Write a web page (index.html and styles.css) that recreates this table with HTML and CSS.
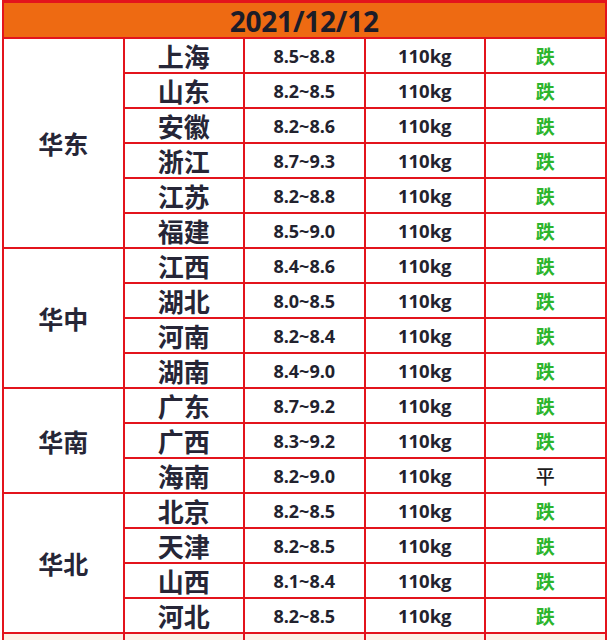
FILE: index.html
```html
<!DOCTYPE html>
<html lang="zh-CN">
<head>
<meta charset="utf-8">
<title>2021/12/12</title>
<link rel="stylesheet" href="styles.css">
</head>
<body>
<div class="sheet">
  <div class="head">2021/12/12</div>

  <div class="region r6">华东</div>
  <div class="prov">上海</div><div class="num">8.5~8.8</div><div class="wt">110kg</div><div class="tr down">跌</div>
  <div class="prov">山东</div><div class="num">8.2~8.5</div><div class="wt">110kg</div><div class="tr down">跌</div>
  <div class="prov">安徽</div><div class="num">8.2~8.6</div><div class="wt">110kg</div><div class="tr down">跌</div>
  <div class="prov">浙江</div><div class="num">8.7~9.3</div><div class="wt">110kg</div><div class="tr down">跌</div>
  <div class="prov">江苏</div><div class="num">8.2~8.8</div><div class="wt">110kg</div><div class="tr down">跌</div>
  <div class="prov">福建</div><div class="num">8.5~9.0</div><div class="wt">110kg</div><div class="tr down">跌</div>

  <div class="region r4">华中</div>
  <div class="prov">江西</div><div class="num">8.4~8.6</div><div class="wt">110kg</div><div class="tr down">跌</div>
  <div class="prov">湖北</div><div class="num">8.0~8.5</div><div class="wt">110kg</div><div class="tr down">跌</div>
  <div class="prov">河南</div><div class="num">8.2~8.4</div><div class="wt">110kg</div><div class="tr down">跌</div>
  <div class="prov">湖南</div><div class="num">8.4~9.0</div><div class="wt">110kg</div><div class="tr down">跌</div>

  <div class="region r3">华南</div>
  <div class="prov">广东</div><div class="num">8.7~9.2</div><div class="wt">110kg</div><div class="tr down">跌</div>
  <div class="prov">广西</div><div class="num">8.3~9.2</div><div class="wt">110kg</div><div class="tr down">跌</div>
  <div class="prov">海南</div><div class="num">8.2~9.0</div><div class="wt">110kg</div><div class="tr flat">平</div>

  <div class="region r4">华北</div>
  <div class="prov">北京</div><div class="num">8.2~8.5</div><div class="wt">110kg</div><div class="tr down">跌</div>
  <div class="prov">天津</div><div class="num">8.2~8.5</div><div class="wt">110kg</div><div class="tr down">跌</div>
  <div class="prov">山西</div><div class="num">8.1~8.4</div><div class="wt">110kg</div><div class="tr down">跌</div>
  <div class="prov">河北</div><div class="num">8.2~8.5</div><div class="wt">110kg</div><div class="tr down">跌</div>

  <div class="next"></div><div class="next"></div><div class="next"></div><div class="next"></div><div class="next"></div>
</div>
</body>
</html>
```

FILE: styles.css
```css
html, body {
  margin: 0;
  padding: 0;
  background: #ffffff;
  overflow: hidden;
}

body {
  font-family: "Open Sans", "Noto Sans CJK SC", sans-serif;
  color: #262637;
}

.sheet {
  margin-left: 2px;
  width: 600.5px;
  padding: 3px 2px 2px 2px;
  background: #e3141c;
  display: grid;
  grid-template-columns: repeat(5, 1fr);
  grid-template-rows: 34px;
  grid-auto-rows: 33px;
  gap: 2px;
}

.sheet > div {
  background: #ffffff;
  display: flex;
  align-items: center;
  justify-content: center;
  white-space: nowrap;
}

.sheet > .head {
  grid-column: 1 / -1;
  background: #ee6a12;
  font-size: 28px;
  font-weight: 700;
  color: #1c1c28;
  letter-spacing: -0.2px;
  padding-top: 1px;
}

.region {
  font-family: "Noto Sans CJK SC", sans-serif;
  font-size: 25px;
  font-weight: 700;
  color: #262637;
}

.r6 { grid-row: span 6; }
.r4 { grid-row: span 4; }
.r3 { grid-row: span 3; }

.prov {
  font-family: "Noto Sans CJK SC", sans-serif;
  font-size: 26px;
  font-weight: 700;
  color: #262637;
}

.num {
  font-size: 18px;
  font-weight: 700;
  color: #22222e;
}

.wt {
  font-size: 18.5px;
  font-weight: 700;
  color: #22222e;
}

.tr {
  font-family: "Noto Sans CJK SC", sans-serif;
  font-size: 19px;
  font-weight: 700;
}

.down { color: #2cb52c; }
.flat { color: #1c1c1c; font-weight: 500; }

.sheet > .next {
  background: #fdf1e6;
}
```
